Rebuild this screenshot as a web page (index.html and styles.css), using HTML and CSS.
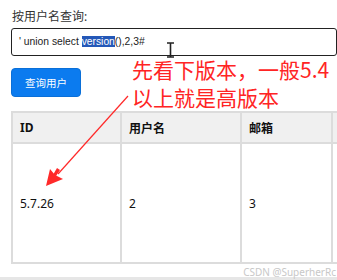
FILE: index.html
```html
<!DOCTYPE html>
<html lang="zh-CN">
<head>
  <meta charset="UTF-8" />
  <title>按用户名查询</title>
  <link rel="stylesheet" href="styles.css">
</head>
<body>
  <main class="page">
    <div class="label">按用户名查询:</div>
    <div class="search-input">' union select <span class="sel">version</span>(),2,3#</div>
    <button class="search-btn">查询用户</button>
    <table class="result">
      <thead>
        <tr><th class="c1">ID</th><th class="c2">用户名</th><th class="c3">邮箱</th><th></th></tr>
      </thead>
      <tbody>
        <tr><td>5.7.26</td><td>2</td><td>3</td><td></td></tr>
      </tbody>
    </table>
  </main>
  <div class="note">先看下版本，一般5.4<br>以上就是高版本</div>
  <svg class="arrow" width="140" height="110" viewBox="0 0 140 110">
    <path d="M128 2 L58 80" stroke="#ff2a2a" stroke-width="1.2" fill="none"/>
    <path d="M60 76 L52 88 L48 90 L50 86 L57 74" fill="#ff2a2a"/>
    <path d="M46 92 L50 75 L55 81 L63 85 Z" fill="#ff2a2a"/>
  </svg>
  <svg class="ibeam" width="9" height="16" viewBox="0 0 9 16">
    <path d="M1 1 H8 M4.5 1 V15 M1 15 H8" stroke="#222" stroke-width="1.6" fill="none"/>
  </svg>
  <div class="footer-band"></div>
  <div class="watermark">CSDN @SuperherRc</div>
</body>
</html>
```
FILE: styles.css
```css
body {
  margin: 0;
  padding: 0;
  width: 337px;
  height: 280px;
  overflow: hidden;
  position: relative;
  background: #fff;
  color: #111;
  font-family: "Noto Sans", "Open Sans", "Noto Sans CJK SC", sans-serif;
}
.page {
  padding: 8px 0 0 11px;
  width: 420px;
}
.label {
  font-size: 12px;
  line-height: 18px;
  color: #333;
  margin: 0 0 2px 1px;
}
.search-input {
  box-sizing: border-box;
  width: 326px;
  height: 28px;
  border: 1.5px solid #222;
  border-radius: 3px;
  padding: 0 0 0 7px;
  font-family: "Liberation Sans", Arial, sans-serif;
  font-size: 10.3px;
  line-height: 25px;
  color: #222;
  white-space: nowrap;
}
.sel {
  background: #2458b8;
  color: #fff;
}
.search-btn {
  display: block;
  margin-top: 12px;
  width: 70px;
  height: 29px;
  background-color: #0b7bef;
  color: #fff;
  border: 1px solid #0a6fd8;
  border-radius: 4px;
  font-family: "Noto Sans CJK SC", sans-serif;
  font-size: 10.5px;
  padding: 0;
}
.result {
  margin-top: 14px;
  border-collapse: collapse;
  font-size: 12px;
  color: #111;
}
.result th, .result td {
  border: 2px solid #dcdcdc;
  text-align: left;
  padding: 0 0 0 7px;
}
.result th {
  background: #f0f0f0;
  height: 29px;
  font-weight: bold;
}
.result td {
  height: 118px;
  vertical-align: middle;
}
.c1 { width: 100px; }
.c2 { width: 111px; }
.c3 { width: 82px; }
.note {
  position: absolute;
  left: 132px;
  top: 55px;
  color: #ff2424;
  font-family: "Noto Sans CJK SC", sans-serif;
  font-size: 21px;
  line-height: 28px;
  white-space: nowrap;
}
.arrow {
  position: absolute;
  left: 0;
  top: 94px;
}
.ibeam {
  position: absolute;
  left: 166px;
  top: 42px;
}
.footer-band {
  position: absolute;
  left: 0;
  top: 277px;
  width: 337px;
  height: 3px;
  background: #e6e6e6;
}
.watermark {
  position: absolute;
  right: 1px;
  top: 265px;
  font-size: 10px;
  color: #c8c8c8;
}
```
